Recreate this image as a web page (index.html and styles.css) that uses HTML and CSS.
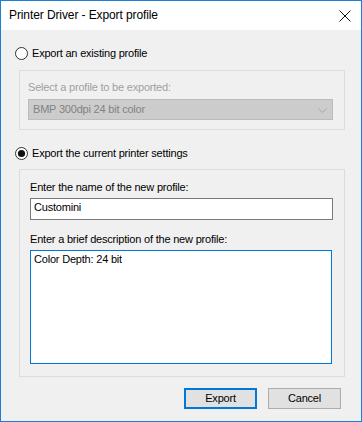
FILE: index.html
```html
<!DOCTYPE html>
<html>
<head>
<meta charset="utf-8">
<link rel="stylesheet" href="styles.css">
</head>
<body>
<div class="window">
  <div class="titlebar">
    <span class="title">Printer Driver - Export profile</span>
    <svg class="close" width="12" height="12" viewBox="0 0 12 12"><path d="M0.5 0.5 L11.5 11.5 M11.5 0.5 L0.5 11.5" stroke="#111" stroke-width="1" fill="none"/></svg>
  </div>
  <div class="content">
    <div class="radio">
      <svg width="13" height="13" viewBox="0 0 13 13"><circle cx="6.5" cy="6.5" r="6" fill="#fff" stroke="#333" stroke-width="1"/></svg>
      <span>Export an existing profile</span>
    </div>
    <div class="group group-existing">
      <div class="label disabled">Select a profile to be exported:</div>
      <div class="combo">
        <span>BMP 300dpi 24 bit color</span>
        <svg class="chevron" width="9" height="5" viewBox="0 0 9 5"><path d="M0.5 0.5 L4.5 4.5 L8.5 0.5" stroke="#a8a8a8" stroke-width="1" fill="none"/></svg>
      </div>
    </div>
    <div class="radio radio-current">
      <svg width="13" height="13" viewBox="0 0 13 13"><circle cx="6.5" cy="6.5" r="6" fill="#fff" stroke="#333" stroke-width="1"/><circle cx="6.5" cy="6.5" r="3.6" fill="#111"/></svg>
      <span>Export the current printer settings</span>
    </div>
    <div class="group group-current">
      <div class="label">Enter the name of the new profile:</div>
      <div class="input">Customini</div>
      <div class="label label-desc">Enter a brief description of the new profile:</div>
      <div class="textarea">Color Depth: 24 bit</div>
    </div>
    <div class="buttons">
      <button class="btn btn-default">Export</button>
      <button class="btn">Cancel</button>
    </div>
  </div>
</div>
</body>
</html>
```
FILE: styles.css
```css
html, body {
  margin: 0;
  padding: 0;
  background: #f0f0f0;
}
.window {
  width: 362px;
  height: 422px;
  box-sizing: border-box;
  border: 1px solid #1a7fd5;
  background: #f0f0f0;
  font-family: "Liberation Sans", Arial, sans-serif;
  font-size: 11px;
  letter-spacing: -0.2px;
  color: #000;
  display: flex;
  flex-direction: column;
}
.titlebar {
  height: 29px;
  background: #fff;
  display: flex;
  align-items: center;
  justify-content: space-between;
  padding: 0 10px 0 8px;
}
.title {
  font-size: 12px;
  letter-spacing: -0.1px;
  line-height: 29px;
  color: #000;
}
.close {
  display: block;
}
.content {
  flex: 1;
  padding: 17px 0 0 14px;
}
.radio {
  display: flex;
  align-items: center;
  gap: 4px;
  height: 13px;
  line-height: 13px;
}
.radio svg {
  display: block;
  flex: none;
}
.group {
  margin-left: 4px;
  width: 326px;
  box-sizing: border-box;
  border: 1px solid #dcdcdc;
}
.group-existing {
  margin-top: 10px;
  padding: 10px 0 9px 8px;
}
.radio-current {
  margin-top: 17px;
}
.group-current {
  margin-top: 9px;
  padding: 11px 0 12px 10px;
}
.label {
  line-height: 13px;
  height: 13px;
  white-space: nowrap;
}
.disabled {
  color: #a0a0a0;
}
.combo {
  margin-top: 5px;
  width: 305px;
  height: 21px;
  box-sizing: border-box;
  background: #cccccc;
  border: 1px solid #bcbcbc;
  display: flex;
  align-items: center;
  justify-content: space-between;
  padding: 0 5px 0 4px;
  color: #838383;
  line-height: 19px;
}
.chevron {
  display: block;
  margin-top: 2px;
}
.input {
  margin-top: 4px;
  width: 303px;
  height: 22px;
  box-sizing: border-box;
  background: #fff;
  border: 1px solid #7a7a7a;
  padding: 2px 3px 0;
  line-height: 13px;
}
.label-desc {
  margin-top: 13px;
}
.textarea {
  margin-top: 4px;
  width: 302px;
  height: 114px;
  box-sizing: border-box;
  background: #fff;
  border: 1px solid #0078d7;
  padding: 2px 3px 0;
  line-height: 13px;
}
.buttons {
  margin-top: 11px;
  margin-right: 20px;
  display: flex;
  justify-content: flex-end;
  gap: 11px;
}
.btn {
  width: 73px;
  height: 21px;
  box-sizing: border-box;
  background: #e1e1e1;
  border: 1px solid #adadad;
  font-family: "Liberation Sans", Arial, sans-serif;
  font-size: 11px;
  letter-spacing: -0.2px;
  color: #000;
  padding: 0;
  margin: 0;
  line-height: 17px;
}
.btn-default {
  border: 2px solid #0078d7;
}
```
